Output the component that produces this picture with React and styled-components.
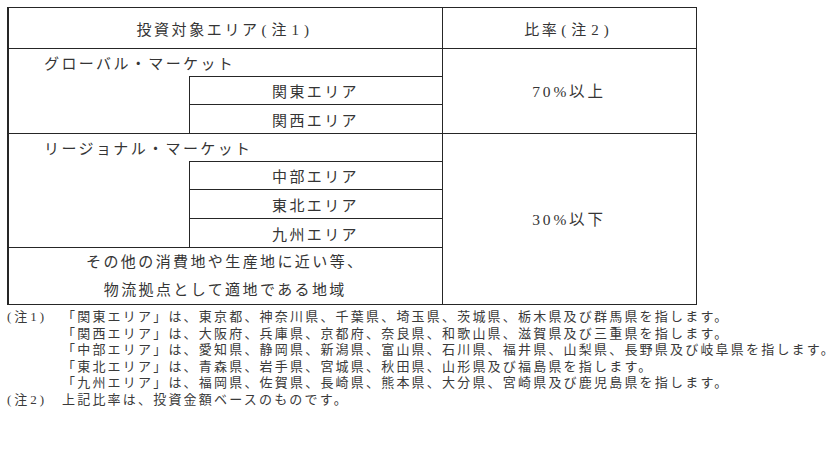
import React from "react";
import styled, { createGlobalStyle } from "styled-components";

const Global = createGlobalStyle`
  html, body { margin: 0; padding: 0; background: #ffffff; }
  body {
    font-family: "Liberation Serif", "Noto Sans CJK JP", serif;
    color: #353535;
  }
`;

const Page = styled.div`
  padding: 7px 0 0 7px;
  width: 828px;
`;

const Table = styled.table`
  border-collapse: collapse;
  table-layout: fixed;
  width: 688px;
  font-size: 15px;
  letter-spacing: 2.4px;
  color: #353535;
`;

const Col = styled.col`
  width: ${(p) => p.$w}px;
`;

const Row = styled.tr`
  height: ${(p) => p.$h}px;
`;

const line = "1px solid #262626";

const Head = styled.th`
  font-weight: 400;
  text-align: center;
  padding: 0;
  border: ${line};
  border-left-width: ${(p) => (p.$first ? "2px" : "1px")};
  letter-spacing: 2.6px;
`;

const Ref = styled.span`
  letter-spacing: ${(p) => p.$ls}px;
  margin-left: ${(p) => p.$ml || 0}px;
`;

const GroupCell = styled.td`
  padding: 0 0 0 35px;
  text-align: left;
  border-top: ${line};
  border-left: 2px solid #262626;
  border-right: 1.5px solid #262626;
  border-bottom: none;
`;

const Blank = styled.td`
  padding: 0;
  border-top: none;
  border-bottom: ${line};
  border-left: 2px solid #262626;
  border-right: 1.5px solid #262626;
`;

const AreaCell = styled.td`
  padding: 0;
  text-align: center;
  border: ${line};
`;

const RatioCell = styled.td`
  padding: 0 0 2px;
  text-align: center;
  vertical-align: middle;
  border: ${line};
  border-left: 1.5px solid #262626;
  font-size: 15.5px;
  letter-spacing: 2.8px;
`;

const OtherCell = styled.td`
  padding: 0;
  text-align: center;
  border: ${line};
  border-left: 2px solid #262626;
  line-height: 28px;
`;

const Notes = styled.div`
  font-size: 13px;
  letter-spacing: 2.2px;
  color: #3a3a3a;
  white-space: nowrap;
  padding-top: 4px;
`;

const NoteRow = styled.div`
  display: grid;
  grid-template-columns: 55px 1fr;
`;

const Label = styled.div`
  letter-spacing: 3px;
  height: 16.6px;
  line-height: 16.6px;
`;

const Body = styled.div`
  display: flex;
  flex-direction: column;
`;

const Line = styled.div`
  height: 16.6px;
  line-height: 16.6px;
`;

const areaNotes = [
  "「関東エリア」は、東京都、神奈川県、千葉県、埼玉県、茨城県、栃木県及び群馬県を指します。",
  "「関西エリア」は、大阪府、兵庫県、京都府、奈良県、和歌山県、滋賀県及び三重県を指します。",
  "「中部エリア」は、愛知県、静岡県、新潟県、富山県、石川県、福井県、山梨県、長野県及び岐阜県を指します。",
  "「東北エリア」は、青森県、岩手県、宮城県、秋田県、山形県及び福島県を指します。",
  "「九州エリア」は、福岡県、佐賀県、長崎県、熊本県、大分県、宮崎県及び鹿児島県を指します。",
];

export default function App() {
  return (
    <>
      <Global />
      <Page>
        <Table>
          <colgroup>
            <Col $w={181} />
            <Col $w={253} />
            <Col $w={254} />
          </colgroup>
          <tbody>
            <Row $h={41}>
              <Head colSpan={2} $first>
                投資対象エリア<Ref $ls={5} $ml={2}>(注1)</Ref>
              </Head>
              <Head>
                比率<Ref $ls={5} $ml={2}>(注2)</Ref>
              </Head>
            </Row>
            <Row $h={28}>
              <GroupCell colSpan={2}>グローバル・マーケット</GroupCell>
              <RatioCell rowSpan={3}>70%以上</RatioCell>
            </Row>
            <Row $h={28}>
              <Blank rowSpan={2} />
              <AreaCell>関東エリア</AreaCell>
            </Row>
            <Row $h={29}>
              <AreaCell>関西エリア</AreaCell>
            </Row>
            <Row $h={28}>
              <GroupCell colSpan={2}>リージョナル・マーケット</GroupCell>
              <RatioCell rowSpan={5}>30%以下</RatioCell>
            </Row>
            <Row $h={28}>
              <Blank rowSpan={3} />
              <AreaCell>中部エリア</AreaCell>
            </Row>
            <Row $h={29}>
              <AreaCell>東北エリア</AreaCell>
            </Row>
            <Row $h={29}>
              <AreaCell>九州エリア</AreaCell>
            </Row>
            <Row $h={56}>
              <OtherCell colSpan={2}>
                その他の消費地や生産地に近い等、
                <br />
                物流拠点として適地である地域
              </OtherCell>
            </Row>
          </tbody>
        </Table>
        <Notes>
          <NoteRow>
            <Label>(注1)</Label>
            <Body>
              {areaNotes.map((t) => (
                <Line key={t}>{t}</Line>
              ))}
            </Body>
          </NoteRow>
          <NoteRow>
            <Label>(注2)</Label>
            <Body>
              <Line>上記比率は、投資金額ベースのものです。</Line>
            </Body>
          </NoteRow>
        </Notes>
      </Page>
    </>
  );
}
